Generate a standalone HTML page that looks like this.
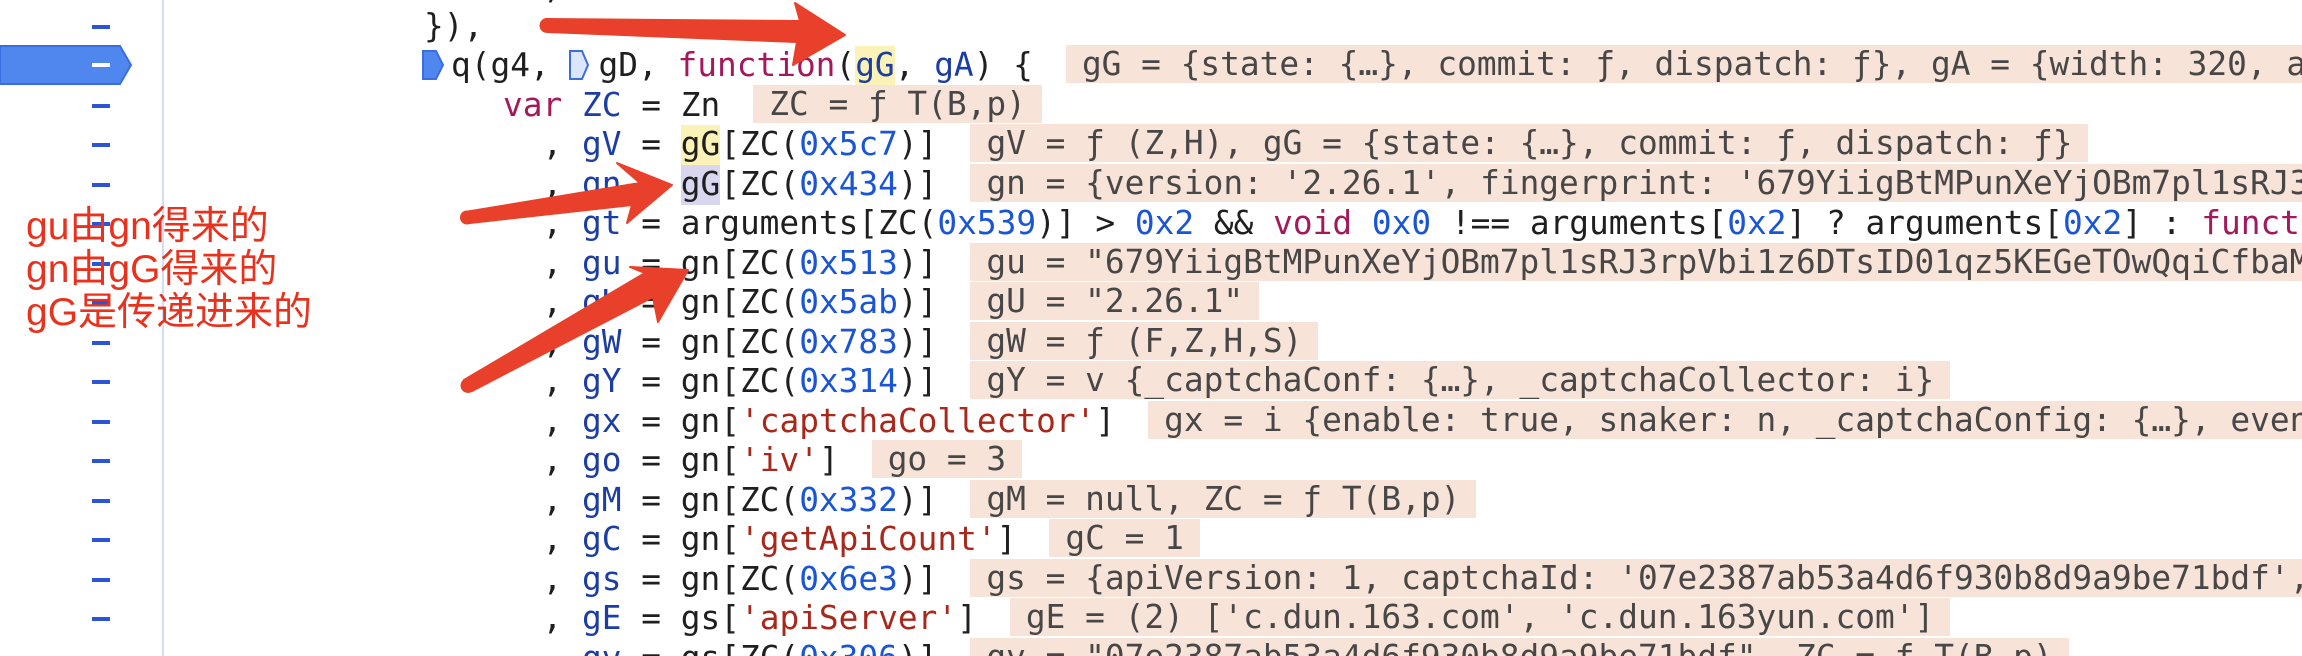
<!DOCTYPE html>
<html><head><meta charset="utf-8"><style>
html,body{margin:0;padding:0;background:#fff;}
body{width:2302px;height:656px;position:relative;overflow:hidden;}
.code{position:absolute;left:0;top:0;width:2302px;height:656px;overflow:hidden;font-family:"DejaVu Sans Mono","Liberation Mono",monospace;font-size:32.8px;color:#1f1f1f;}
.row{position:absolute;left:424px;height:39.5px;line-height:39.5px;white-space:pre;}
.v{color:#1c3ea3}.n{color:#1a55d6}.k{color:#a3195c}.s{color:#a8291c}
.b{background:#f8e3d8;color:#474747;padding:0 16px;margin-left:33px;display:inline-block;height:38px;line-height:38px;vertical-align:top;margin-top:-1px;}
.hy{background:#fbf2b7;display:inline-block;height:39.5px}
.hl{background:#d9d7ef;display:inline-block;height:39.5px}
.mk{display:inline-block;width:29px;height:39.5px;vertical-align:top;position:relative}
.dash{position:absolute;left:92px;width:18px;height:4px;background:#2b55d6;}
.note{position:absolute;left:26px;font-family:"Liberation Sans","Noto Sans CJK SC",sans-serif;font-size:39px;color:#e8321e;line-height:43px;white-space:nowrap;}
</style></head><body>
<div style="position:absolute;left:162px;top:0;width:2px;height:656px;background:#d3def4"></div>
<svg style="position:absolute;left:0;top:0" width="170" height="656">
<polygon points="0,46 120,46 131,65 120,84 0,84" fill="#4f87ee" stroke="#3a6de0" stroke-width="2"/>
<rect x="92" y="63" width="18" height="4" fill="#fff"/>
</svg>
<div class="dash" style="top:25px"></div>
<div class="dash" style="top:104px"></div>
<div class="dash" style="top:143px"></div>
<div class="dash" style="top:183px"></div>
<div class="dash" style="top:222px"></div>
<div class="dash" style="top:262px"></div>
<div class="dash" style="top:301px"></div>
<div class="dash" style="top:341px"></div>
<div class="dash" style="top:380px"></div>
<div class="dash" style="top:420px"></div>
<div class="dash" style="top:459px"></div>
<div class="dash" style="top:499px"></div>
<div class="dash" style="top:538px"></div>
<div class="dash" style="top:578px"></div>
<div class="dash" style="top:617px"></div>

<div class="note" style="top:205px">gu由gn得来的</div>
<div class="note" style="top:248px">gn由gG得来的</div>
<div class="note" style="top:291px">gG是传递进来的</div>

<div class="code">
<div class="row" style="top:-32px">      ,</div>
<div class="row" style="top:7px">}),</div>
<div class="row" style="top:46px;left:422px"><span class="mk"><svg width="29" height="40" style="position:absolute;left:0;top:0"><polygon points="1,5 14,5 21,19 14,33 1,33" fill="#4f87ee" stroke="#3a6de0" stroke-width="2"/></svg></span>q(g4, <span class="mk"><svg width="29" height="40" style="position:absolute;left:0;top:0"><polygon points="1,5 13,5 19,19 13,33 1,33" fill="#dbe5fb" stroke="#3a6de0" stroke-width="2"/></svg></span>gD, <span class="k">function</span>(<span class="hy v">gG</span>, <span class="v">gA</span>) {<span class="b">gG = {state: {…}, commit: ƒ, dispatch: ƒ}, gA = {width: 320, a</span></div>
<div class="row" style="top:86px">    <span class="k">var</span> <span class="v">ZC</span> = Zn<span class="b">ZC = ƒ T(B,p)</span></div>
<div class="row" style="top:125px">      , <span class="v">gV</span> = <span class="hy">gG</span>[ZC(<span class="n">0x5c7</span>)]<span class="b">gV = ƒ (Z,H), gG = {state: {…}, commit: ƒ, dispatch: ƒ}</span></div>
<div class="row" style="top:165px">      , <span class="v">gn</span> = <span class="hl">gG</span>[ZC(<span class="n">0x434</span>)]<span class="b">gn = {version: '2.26.1', fingerprint: '679YiigBtMPunXeYjOBm7pl1sRJ3rpVbi1z6DTsID01qz5KEGeTOwQqiCfbaM</span></div>
<div class="row" style="top:204px">      , <span class="v">gt</span> = arguments[ZC(<span class="n">0x539</span>)] &gt; <span class="n">0x2</span> &amp;&amp; <span class="k">void</span> <span class="n">0x0</span> !== arguments[<span class="n">0x2</span>] ? arguments[<span class="n">0x2</span>] : <span class="k">function</span></div>
<div class="row" style="top:244px">      , <span class="v">gu</span> = gn[ZC(<span class="n">0x513</span>)]<span class="b">gu = "679YiigBtMPunXeYjOBm7pl1sRJ3rpVbi1z6DTsID01qz5KEGeTOwQqiCfbaM</span></div>
<div class="row" style="top:283px">      , <span class="v">gU</span> = gn[ZC(<span class="n">0x5ab</span>)]<span class="b">gU = "2.26.1"</span></div>
<div class="row" style="top:323px">      , <span class="v">gW</span> = gn[ZC(<span class="n">0x783</span>)]<span class="b">gW = ƒ (F,Z,H,S)</span></div>
<div class="row" style="top:362px">      , <span class="v">gY</span> = gn[ZC(<span class="n">0x314</span>)]<span class="b">gY = v {_captchaConf: {…}, _captchaCollector: i}</span></div>
<div class="row" style="top:402px">      , <span class="v">gx</span> = gn[<span class="s">'captchaCollector'</span>]<span class="b">gx = i {enable: true, snaker: n, _captchaConfig: {…}, event</span></div>
<div class="row" style="top:441px">      , <span class="v">go</span> = gn[<span class="s">'iv'</span>]<span class="b">go = 3</span></div>
<div class="row" style="top:481px">      , <span class="v">gM</span> = gn[ZC(<span class="n">0x332</span>)]<span class="b">gM = null, ZC = ƒ T(B,p)</span></div>
<div class="row" style="top:520px">      , <span class="v">gC</span> = gn[<span class="s">'getApiCount'</span>]<span class="b">gC = 1</span></div>
<div class="row" style="top:560px">      , <span class="v">gs</span> = gn[ZC(<span class="n">0x6e3</span>)]<span class="b">gs = {apiVersion: 1, captchaId: '07e2387ab53a4d6f930b8d9a9be71bdf', </span></div>
<div class="row" style="top:599px">      , <span class="v">gE</span> = gs[<span class="s">'apiServer'</span>]<span class="b">gE = (2) ['c.dun.163.com', 'c.dun.163yun.com']</span></div>
<div class="row" style="top:639px">      , <span class="v">gv</span> = gs[ZC(<span class="n">0x306</span>)]<span class="b">gv = "07e2387ab53a4d6f930b8d9a9be71bdf", ZC = ƒ T(B,p)</span></div>
</div>

<svg style="position:absolute;left:0;top:0" width="2302" height="656">
<g fill="#e8402a" stroke="#e8402a" stroke-linejoin="round" stroke-width="2">
<polygon points="546,19 800,21 795,3 845,35 793,65 797,42 548,32"/>
<circle cx="547" cy="25.5" r="6.5"/>
<polygon points="465,212 640,183 617,163 672,185 627,223 632,205 470,223"/>
<circle cx="467" cy="217.5" r="6"/>
<polygon points="464,380 645,273 630,267 688,270 658,322 653,297 472,391"/>
<circle cx="468" cy="385.5" r="6.5"/>
</g>
</svg>
</body></html>
